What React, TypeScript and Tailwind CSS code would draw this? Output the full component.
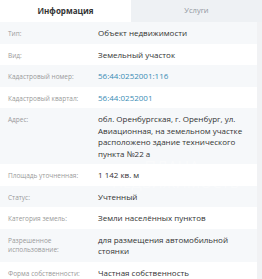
const rows: { label: string; value: string; link?: boolean }[] = [
  { label: 'Тип:', value: 'Объект недвижимости' },
  { label: 'Вид:', value: 'Земельный участок' },
  { label: 'Кадастровый номер:', value: '56:44:0252001:116', link: true },
  { label: 'Кадастровый квартал:', value: '56:44:0252001', link: true },
  {
    label: 'Адрес:',
    value:
      'обл. Оренбургская, г. Оренбург, ул. Авиационная, на земельном участке расположено здание технического пункта №22 а',
  },
  { label: 'Площадь уточненная:', value: '1 142 кв. м' },
  { label: 'Статус:', value: 'Учтенный' },
  { label: 'Категория земель:', value: 'Земли населённых пунктов' },
  {
    label: 'Разрешенное использование:',
    value: 'для размещения автомобильной стоянки',
  },
  { label: 'Форма собственности:', value: 'Частная собственность' },
];

export default function App() {
  return (
    <div className="relative w-[262px] h-[279px] overflow-hidden bg-white font-['Open_Sans',sans-serif]">
      {/* Tabs */}
      <div className="flex h-[22px]">
        <div className="w-[131px] flex items-center justify-center bg-white text-[8px] font-bold text-[#333]">
          Информация
        </div>
        <div className="flex-1 flex items-center justify-center bg-[#eef1f4] text-[7.5px] text-[#9097a0]">
          Услуги
        </div>
      </div>

      {/* Rows */}
      <div className="flex border-r-[5px] border-[#f1f2f4]">
        <div className="flex-1">
          {rows.map((row, i) => (
            <div
              key={row.label}
              className={`flex py-[5px] ${i % 2 === 0 ? 'bg-[#f6f8fa]' : 'bg-white'}`}
            >
              <div className="w-[98px] shrink-0 pl-[8px] pr-2 pt-[2px] text-[6.5px] leading-[9px] text-[#9a9a9a]">
                {row.label}
              </div>
              <div
                className={`flex-1 pr-2 text-[8px] leading-[11.5px] ${
                  row.link ? 'text-[#3b8db5]' : 'text-[#333]'
                }`}
              >
                {row.value}
              </div>
            </div>
          ))}
        </div>
      </div>

      {/* Watermark */}
      <div className="pointer-events-none absolute left-[112px] top-[160px] w-[120px] text-center text-white/40 leading-[15px]">
        <div className="text-[16px]">ПЛАНА</div>
        <div className="text-[15px]">НЕДВИЖИМОСТЬ</div>
      </div>
    </div>
  );
}
